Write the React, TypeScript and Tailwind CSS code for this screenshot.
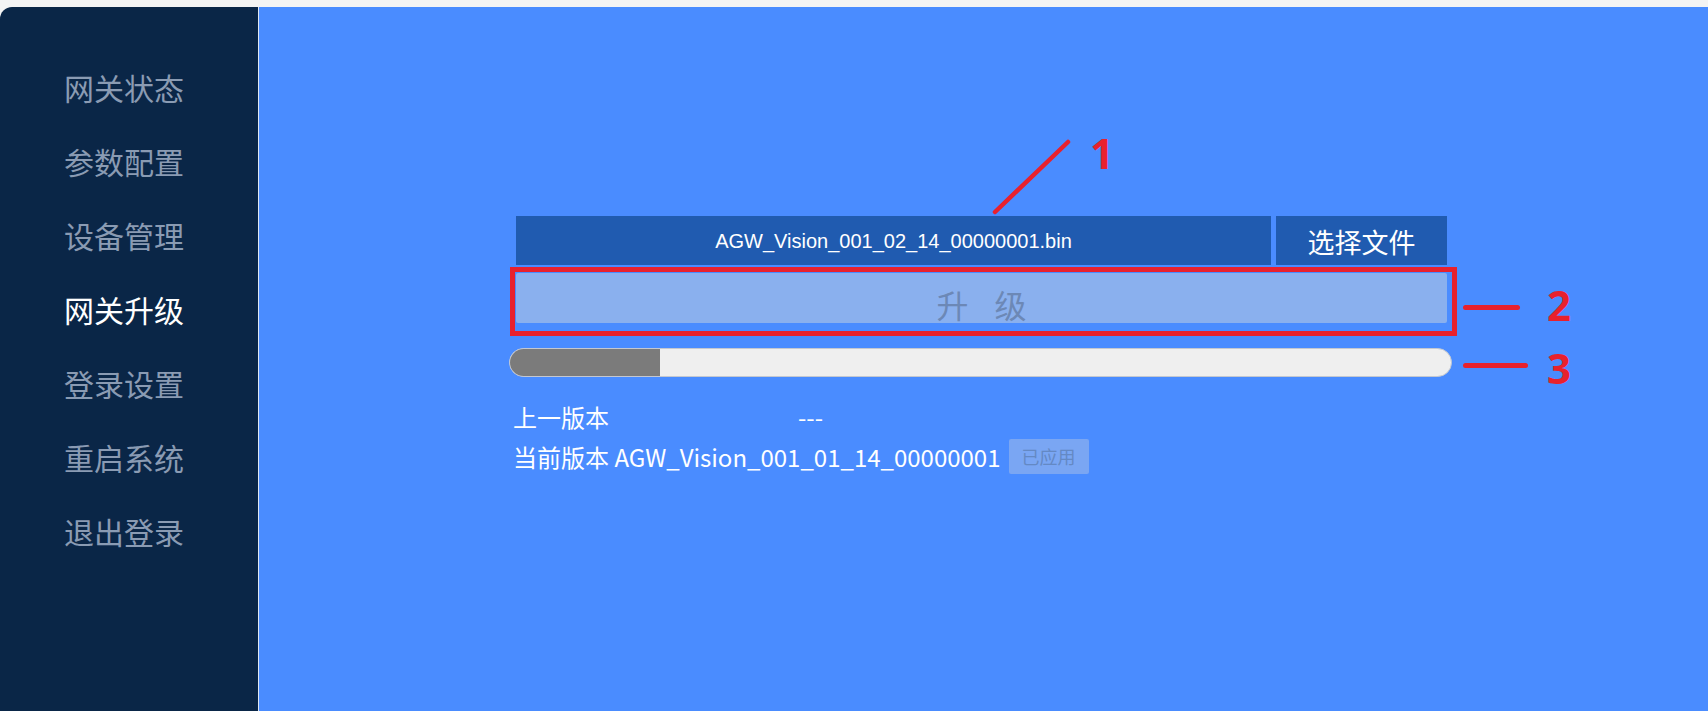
const menu = ['网关状态', '参数配置', '设备管理', '网关升级', '登录设置', '重启系统', '退出登录']

const cjk = { fontFamily: '"Noto Sans CJK SC", "Noto Sans", sans-serif' }

export default function App() {
  return (
    <div className="w-[1708px] h-[711px] bg-[#f4f4f4] pt-[7px] flex flex-col overflow-hidden" style={cjk}>
      <div className="flex flex-1">
        {/* sidebar */}
        <aside className="w-[258px] bg-[#0a2647] rounded-tl-[12px] pt-[43px] border-r border-[#dfe7f2] box-content">
          {menu.map((m) => (
            <div
              key={m}
              className={`h-[74px] flex items-center pl-[64px] text-[30px] ${m === '网关升级' ? 'text-white' : 'text-[#8a9bb3]'}`}
            >
              {m}
            </div>
          ))}
        </aside>

        {/* main */}
        <main className="flex-1 bg-[#4a8cff] pl-[257px] pt-[209px] relative">
          <div className="w-[931px] flex flex-col">
            {/* file row */}
            <div className="flex gap-[5px] h-[49px] relative">
              <div
                className="w-[755px] bg-[#205bb0] text-white text-[20px] flex items-center justify-center"
                style={{ fontFamily: '"Liberation Sans", Arial, sans-serif' }}
              >
                AGW_Vision_001_02_14_00000001.bin
              </div>
              <button className="w-[171px] bg-[#205bb0] text-white text-[27px] flex items-center justify-center pt-[3px]">
                选择文件
              </button>
              {/* annotation 1 */}
              <svg className="absolute left-[476px] top-[-78px]" width="90" height="80" viewBox="0 0 90 80">
                <line x1="3" y1="74" x2="76" y2="4" stroke="#e8212d" strokeWidth="4.5" strokeLinecap="round" />
              </svg>
              <span className="absolute left-[574px] top-[-95px] text-[42px] font-bold text-[#e8212d]" style={{ fontFamily: '"Noto Sans", sans-serif' }}>
                1
              </span>
            </div>

            {/* upgrade button */}
            <div className="relative mt-[8px]">
              <button className="w-[931px] h-[50px] bg-[#8ab0ee] rounded-[2px] text-[#6c88b6] text-[32px] flex items-center justify-center gap-[26px] pt-[12px]">
                <span>升</span>
                <span>级</span>
              </button>
              <div className="absolute left-[-6px] top-[-6px] right-[-10px] bottom-[-13px] border-[5px] border-[#e8212d] pointer-events-none" />
              <div className="absolute left-[947px] top-[32px] w-[57px] h-[5px] bg-[#e8212d] rounded-full" />
              <span className="absolute left-[1031px] top-[11px] text-[42px] leading-none font-bold text-[#e8212d]" style={{ fontFamily: '"Noto Sans", sans-serif' }}>
                2
              </span>
            </div>

            {/* progress */}
            <div className="relative mt-[25px] ml-[-7px] w-[943px] h-[29px] rounded-full bg-[#efefef] border border-[#c4c8d0] overflow-hidden">
              <div className="h-full bg-[#7b7b7b]" style={{ width: 150 }} />
            </div>
            <div className="relative">
              <div className="absolute left-[947px] top-[-14px] w-[65px] h-[5px] bg-[#e8212d] rounded-full" />
              <span className="absolute left-[1031px] top-[-30px] text-[42px] leading-none font-bold text-[#e8212d]" style={{ fontFamily: '"Noto Sans", sans-serif' }}>
                3
              </span>
            </div>

            {/* versions */}
            <div className="mt-[19px] ml-[-3px] text-white text-[24px]">
              <div className="h-[41px] flex items-center">
                <span>上一版本</span>
                <span className="ml-[189px]">---</span>
              </div>
              <div className="h-[39px] flex items-center">
                <span>当前版本 AGW_Vision_001_01_14_00000001</span>
                <span className="ml-[8px] h-[35px] px-[13px] bg-[#7aa6f3] rounded-[2px] text-[18px] text-[#6489c4] flex items-center">
                  已应用
                </span>
              </div>
            </div>
          </div>
        </main>
      </div>
    </div>
  )
}
